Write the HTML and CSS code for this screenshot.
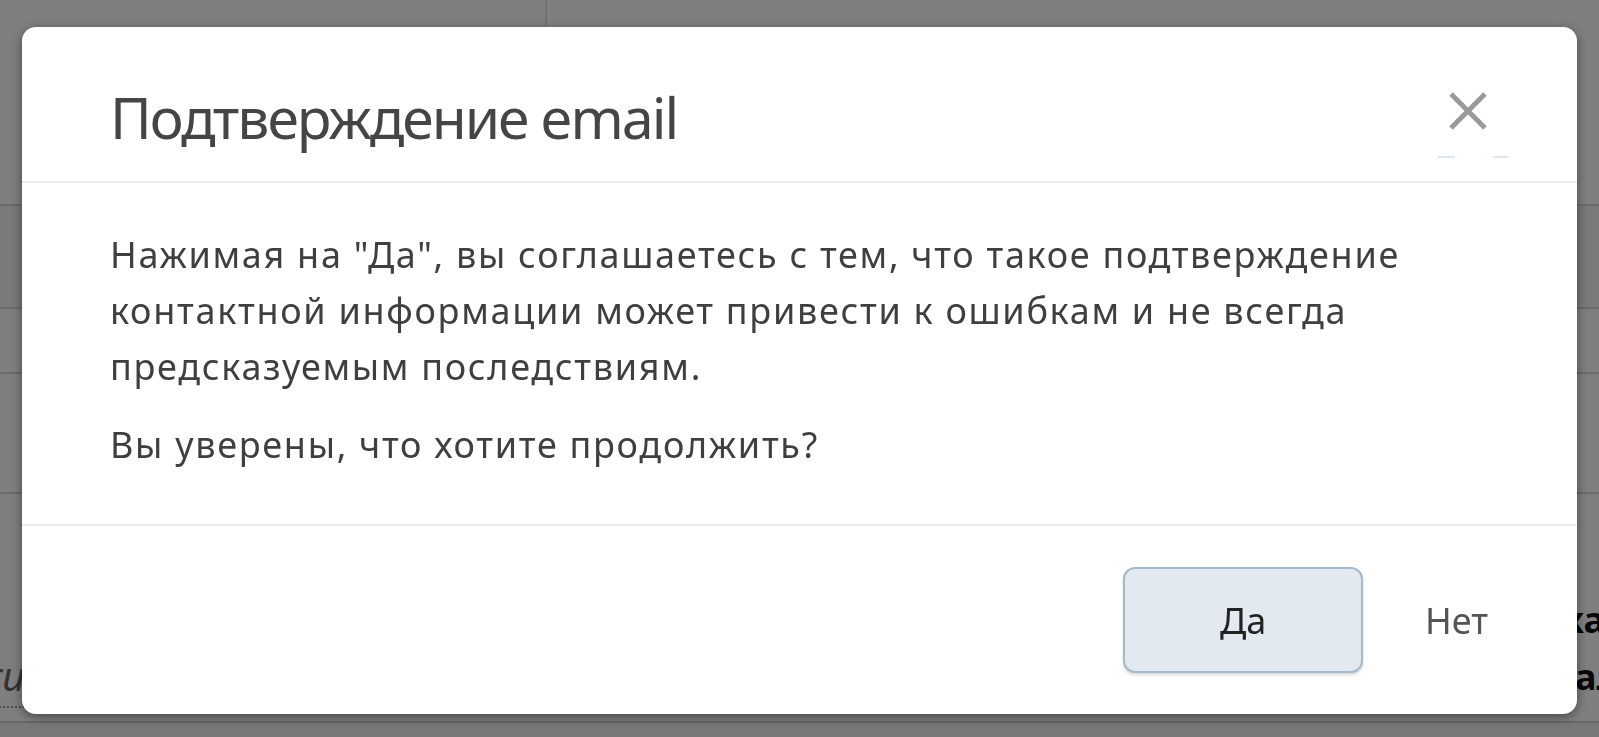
FILE: index.html
```html
<!DOCTYPE html>
<html lang="ru">
<head>
<meta charset="utf-8">
<title>Подтверждение email</title>
<link rel="stylesheet" href="styles.css">
</head>
<body>
<div class="page">
  <div class="page-top">
    <div class="page-top-left"></div>
    <div class="page-top-right"></div>
  </div>
  <div class="row r2"></div>
  <div class="row r3"></div>
  <div class="row r4"></div>
  <div class="row r5">
    <span class="hint">ru</span>
    <div class="side-text"><b class="s1">ка</b><b class="s2">ал</b></div>
  </div>
  <div class="page-bottom"></div>
</div>

<div class="overlay"></div>

<div class="modal" role="dialog">
  <div class="modal-header">
    <h2 class="modal-title">Подтверждение email</h2>
    <button class="modal-close" aria-label="Закрыть">
      <svg viewBox="0 0 40 40" width="40" height="40"><path d="M3 3 L37 37 M37 3 L3 37" stroke="#9a9a9a" stroke-width="5" stroke-linecap="butt"/></svg>
    </button>
  </div>
  <div class="modal-body">
    <p>Нажимая на "Да", вы соглашаетесь с тем, что такое подтверждение контактной информации может привести к ошибкам и не всегда предсказуемым последствиям.</p>
    <p>Вы уверены, что хотите продолжить?</p>
  </div>
  <div class="modal-footer">
    <button class="btn btn-yes">Да</button>
    <button class="btn btn-no">Нет</button>
  </div>
</div>
</body>
</html>
```
FILE: styles.css
```css
html, body {
  margin: 0;
  padding: 0;
  height: 100%;
  overflow: hidden;
}
body {
  font-family: "Noto Sans", "Open Sans", sans-serif;
  background: #ffffff;
}

/* underlying page (mostly hidden by the overlay) */
.page {
  height: 737px;
  display: flex;
  flex-direction: column;
}
.page-top {
  height: 204px;
  display: flex;
}
.page-top-left {
  width: 545px;
  border-right: 2px solid #e2e2e2;
}
.page-top-right { flex: 1; }
.row {
  border-top: 2px solid #d6d6d6;
}
.r2 { height: 101px; background: #f4f4f4; }
.r3 { height: 63px; }
.r4 { height: 118px; }
.r5 {
  flex: 1;
  display: flex;
  justify-content: space-between;
  align-items: flex-start;
}
.side-text {
  display: flex;
  flex-direction: column;
  width: 42px;
  padding-top: 97px;
  margin-right: -5px;
  font-size: 36px;
  line-height: 57px;
  color: #111;
  white-space: nowrap;
}
.s2 { margin-left: 13px; }
.hint {
  margin-left: -14px;
  margin-top: 152px;
  font-size: 40px;
  line-height: 60px;
  font-style: italic;
  color: #666;
  border-bottom: 2px dotted #999;
}
.page-bottom {
  height: 14px;
  border-top: 2px solid #cfcfcf;
  background: #f0f0f0;
}

.overlay {
  position: fixed;
  inset: 0;
  background: rgba(0, 0, 0, 0.5);
}

/* modal */
.modal {
  position: fixed;
  left: 22px;
  top: 27px;
  width: 1555px;
  height: 687px;
  background: #fff;
  border-radius: 14px;
  box-shadow: 0 3px 12px rgba(0, 0, 0, 0.45);
  display: flex;
  flex-direction: column;
  color: #444;
}
.modal-header {
  height: 154px;
  border-bottom: 2px solid #ececec;
  display: flex;
  align-items: flex-start;
  justify-content: space-between;
  padding: 0 69px 0 88px;
}
.modal-title {
  margin: 50px 0 0;
  font-weight: 400;
  font-size: 57px;
  line-height: 80px;
  letter-spacing: -2px;
  color: #454545;
}
.modal-close {
  margin-top: 63px;
  width: 70px;
  height: 68px;
  padding: 1px 11px 0 0;
  border: 0;
  background: none;
  display: flex;
  align-items: flex-start;
  justify-content: center;
  position: relative;
}
.modal-close::after {
  content: "";
  position: absolute;
  left: 0;
  right: 0;
  bottom: 0;
  height: 2px;
  background: linear-gradient(to right, #dfe5ec 0 17px, transparent 17px 55px, #dfe5ec 55px 70px);
}
.modal-body {
  height: 343px;
  border-bottom: 2px solid #ececec;
  padding: 44px 88px 0;
  box-sizing: border-box;
}
.modal-body p {
  margin: 0 0 22px;
  font-size: 36px;
  line-height: 56px;
  letter-spacing: 1.7px;
  color: #3f3f3f;
}
.modal-footer {
  flex: 1;
  display: flex;
  align-items: center;
  justify-content: flex-end;
  padding: 0 89px 0 88px;
  gap: 62px;
}
.btn {
  font-family: inherit;
  font-size: 36px;
  cursor: pointer;
}
.btn-yes {
  width: 240px;
  height: 106px;
  border: 2px solid #a4b9c9;
  border-radius: 12px;
  background: #e2e9f0;
  color: #222;
  box-shadow: 0 2px 3px rgba(0, 0, 0, 0.15);
  padding: 0;
}
.btn-no {
  border: 0;
  background: none;
  color: #555;
  padding: 0;
}
```
